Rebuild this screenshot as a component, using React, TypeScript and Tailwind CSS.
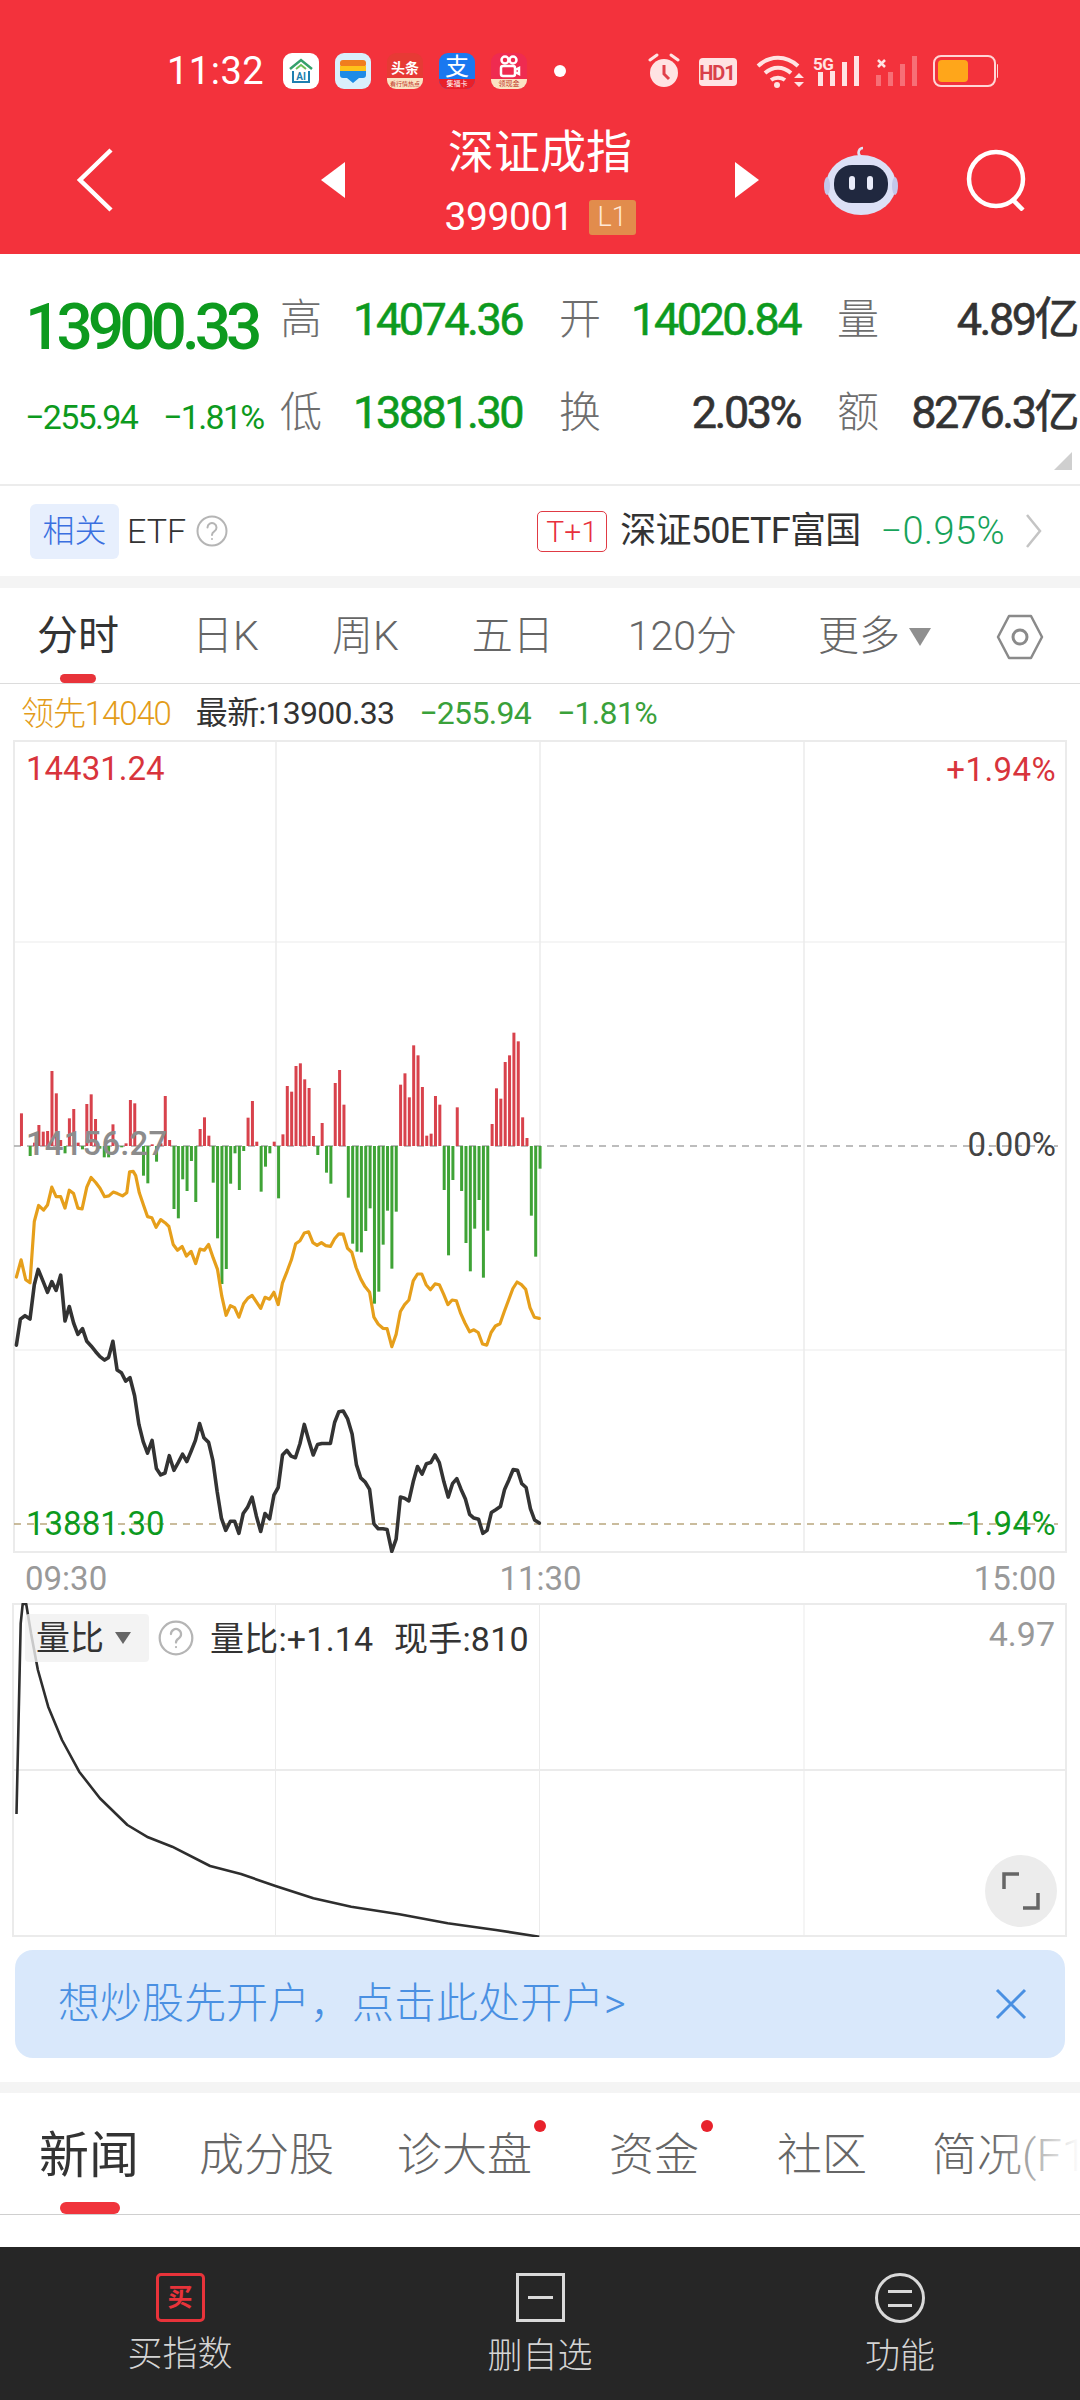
const BARS = [
  0, 98, 0, -30, 10, 63, 43, 45, 225, 158, 18, -22, 83, 111, 10, -10, 126, 155, 81, -8, -34, -34, 65, 0, -4, 8, 138, 128, 0, -89,
  -112, 5, -47, 8, 150, 18, -189, -217, -100, -135, -45, -168, 51, 86, 31, -110, -277, -414, -369, -113, -22, -132, -15, 85, 135, 13, -137, -62, -22, 13,
  -157, 35, 180, 163, 240, 248, 200, 174, 30, -27, 69, -80, -113, 189, 228, 124, -155, -293, -317, -319, -255, -187, -473, -437, -296, -194, -368, -197, 184, 218,
  146, 302, 272, 177, 31, 37, 150, 124, -132, -328, -102, 116, -135, -291, -376, -248, -162, -395, -254, 66, 173, 142, 252, 272, 340, 314, 86, 24, -209, -332,
  -68,
];

// traced from the reference, x/2.8 and y/2.613 + 990 give page pixels
const GOLD = [46,750,59,705,72,757,84,765,96,605,108,563,122,575,133,562,145,515,157,540,170,540,182,570,194,523,206,532,218,570,230,572,243,515,255,490,268,503,280,518,293,540,305,538,317,528,329,532,343,538,355,530,363,475,373,474,380,485,390,530,403,565,413,592,425,595,437,620,450,600,462,608,473,618,485,665,497,680,510,670,522,695,535,683,548,715,560,677,572,680,584,665,597,700,609,730,621,800,633,850,645,825,657,830,669,855,682,820,694,805,706,798,718,815,730,832,742,803,755,808,767,790,779,822,791,765,804,735,816,705,828,663,840,655,852,635,864,632,876,660,888,667,900,660,912,668,925,670,937,650,949,637,961,638,973,675,985,685,997,725,1010,755,1022,775,1035,790,1047,855,1059,873,1072,884,1084,885,1097,932,1109,900,1121,840,1133,822,1145,810,1157,760,1169,742,1181,742,1193,770,1205,783,1218,768,1230,770,1242,795,1254,822,1266,810,1278,812,1290,845,1302,870,1315,893,1327,888,1339,895,1351,925,1363,928,1375,895,1387,878,1400,872,1412,840,1424,810,1436,780,1448,763,1460,770,1472,782,1484,830,1496,855,1510,858];
const BLACK = [46,928,57,860,70,851,84,860,96,770,107,730,120,760,133,790,145,762,157,785,170,745,182,865,194,827,206,870,218,900,231,885,243,918,255,930,268,945,280,958,293,967,304,960,316,918,328,993,340,1000,352,1022,364,1013,377,1060,389,1135,401,1180,413,1210,426,1177,438,1250,450,1267,462,1262,474,1217,487,1255,499,1235,511,1213,523,1232,535,1205,547,1177,559,1133,571,1170,584,1182,596,1230,608,1310,620,1380,632,1412,645,1388,657,1388,669,1420,681,1368,693,1352,706,1325,718,1375,730,1415,742,1368,755,1382,767,1320,779,1300,791,1215,803,1203,815,1218,827,1222,840,1185,852,1135,864,1175,877,1215,889,1188,901,1185,925,1185,937,1130,949,1102,961,1100,973,1120,986,1160,998,1240,1010,1275,1022,1285,1035,1305,1047,1395,1059,1408,1072,1408,1084,1410,1097,1467,1109,1435,1121,1325,1133,1328,1145,1335,1157,1285,1169,1245,1182,1265,1194,1238,1206,1235,1218,1215,1230,1235,1243,1285,1255,1325,1267,1290,1279,1277,1291,1305,1303,1330,1315,1370,1327,1380,1340,1383,1352,1420,1364,1412,1376,1365,1388,1358,1401,1350,1413,1305,1425,1280,1437,1253,1449,1255,1461,1290,1473,1300,1485,1355,1497,1385,1510,1393];
// x/1.452 and y/3 + 1590
const RATIO = [24,672,30,100,33,42,38,42,45,130,55,240,70,350,90,450,115,545,145,625,185,705,215,742,250,770,305,828,350,852,400,888,455,925,510,950,580,973,650,1000,720,1020,783,1040];

const tracePoints = (d: number[], sx: number, sy: number, oy: number) => {
  const out: string[] = [];
  for (let i = 0; i < d.length; i += 2) {
    out.push(`${(d[i] / sx).toFixed(1)},${(d[i + 1] / sy + oy).toFixed(1)}`);
  }
  return out.join(" ");
};

function MainChart() {
  return (
    <svg viewBox="13 740 1054 813" className="absolute inset-0 h-full w-full">
      <g stroke="#ebebeb" fill="none">
        <rect x="14" y="741" width="1052" height="811" strokeWidth="2" />
        <path d="M276 741V1552M540 741V1552M804 741V1552" strokeWidth="1.5" />
        <path d="M14 942H1066M14 1350H1066" strokeWidth="1" />
      </g>
      <path d="M14 1146H1058" stroke="#a8a8a8" strokeWidth="1.5" strokeDasharray="7 6" />
      <path d="M14 1524H1058" stroke="#b9a67d" strokeWidth="1.5" strokeDasharray="7 6" />
      {BARS.map((v, i) =>
        v === 0 ? null : (
          <rect
            key={i}
            x={15.6 + 4.358 * i}
            y={v > 0 ? 1146 - v / 3 : 1146}
            width="3"
            height={Math.abs(v) / 3}
            fill={v > 0 ? "#d8424c" : "#3fa336"}
          />
        )
      )}
      <polyline points={tracePoints(GOLD, 2.8, 2.613, 990)} fill="none" stroke="#e69f1b" strokeWidth="3.200" strokeLinejoin="round" strokeLinecap="round" />
      <polyline points={tracePoints(BLACK, 2.8, 2.613, 990)} fill="none" stroke="#333333" strokeWidth="3.600" strokeLinejoin="round" strokeLinecap="round" />
    </svg>
  );
}

function RatioChart() {
  return (
    <svg viewBox="12 1603 1055 334" className="absolute inset-0 h-full w-full">
      <g stroke="#ebebeb" fill="none">
        <rect x="13" y="1604" width="1053" height="332" strokeWidth="2" />
        <path d="M275.500 1604V1936M539.500 1604V1936M804 1604V1936" strokeWidth="1" />
        <path d="M13 1770H1066" strokeWidth="2" />
      </g>
      <polyline points={tracePoints(RATIO, 1.452, 3, 1590)} fill="none" stroke="#2e2e2e" strokeWidth="2.600" strokeLinejoin="round" />
    </svg>
  );
}

function Quote({ label, value, dark }: { label: string; value: string; dark?: boolean }) {
  return (
    <div className="flex items-center justify-between">
      <span className="text-[42px] font-light leading-none text-[#6e6e6e]">{label}</span>
      <span className={`text-[45px] leading-none tracking-[-2.500px] [-webkit-text-stroke:0.6px_currentColor] ${dark ? "text-[#333333]" : "text-[#0d9a1e]"}`}>{value}</span>
    </div>
  );
}

function HelpDot({ size }: { size: number }) {
  return (
    <svg width={size} height={size} viewBox="0 0 32 32" fill="none" stroke="#b5b5b5">
      <circle cx="16" cy="16" r="14.500" strokeWidth="2" />
      <path d="M11.500 12.500a4.500 4.500 0 1 1 6.800 3.900c-1.500.9-2.300 1.600-2.300 3.600" strokeWidth="2" strokeLinecap="round" />
      <circle cx="16" cy="24" r="1" fill="#b5b5b5" stroke="none" />
    </svg>
  );
}

function AppIcon({ children, className }: { children: React.ReactNode; className: string }) {
  return <div className={`relative h-[36px] w-[36px] shrink-0 overflow-hidden rounded-[9px] ${className}`}>{children}</div>;
}

function StatusBar() {
  return (
    <div className="flex h-[54px] items-center pl-[167px] text-white">
      <span className="w-[116px] text-[38px] leading-none tracking-[0.5px]">11:32</span>
      <div className="flex items-center gap-[16px]">
        <AppIcon className="bg-white">
          <svg viewBox="0 0 36 36" className="h-full w-full" fill="none">
            <path d="M7 16 18 7l11 9" stroke="#35a06c" strokeWidth="2.500" />
            <path d="M10 18v11h16V18" stroke="#1e7fb0" strokeWidth="2" />
            <path d="M13 16l5-4 5 4" stroke="#6cc05a" strokeWidth="2" />
            <text x="18" y="27" textAnchor="middle" fontSize="10" fill="#1e7fb0" fontFamily="Roboto, sans-serif" fontWeight="700">AI</text>
          </svg>
        </AppIcon>
        <AppIcon className="bg-[#d9effc]">
          <svg viewBox="0 0 36 36" className="h-full w-full">
            <rect x="5" y="7" width="26" height="7" rx="3" fill="#f07e1e" />
            <rect x="5" y="13" width="26" height="6" fill="#ffc21a" />
            <path d="M5 18h26v4a3 3 0 0 1-3 3h-4l-6 5-6-5H8a3 3 0 0 1-3-3z" fill="#1d8be6" />
          </svg>
        </AppIcon>
        <AppIcon className="bg-[#e73a35]">
          <div className="flex h-[27px] items-center justify-center pt-[3px] text-[14px] font-bold leading-none text-white">头条</div>
          <div className="absolute inset-x-0 bottom-0 h-[11px] bg-[#fbe3c3] text-center text-[6px] leading-[11px] text-[#c0392b]">看行情热点</div>
        </AppIcon>
        <AppIcon className="bg-[#1a78f0]">
          <div className="flex h-[27px] items-center justify-center text-[24px] leading-none text-white">支</div>
          <div className="absolute inset-x-0 bottom-0 h-[10px] bg-[#e8202a] text-center text-[7px] leading-[10px] text-white">集福卡</div>
        </AppIcon>
        <AppIcon className="bg-[#ef2b50]">
          <svg viewBox="0 0 36 36" className="h-full w-full" fill="none" stroke="#fff" strokeWidth="2.500">
            <circle cx="14" cy="7" r="3.500" />
            <circle cx="22" cy="7" r="3.500" />
            <rect x="10" y="13" width="14" height="10" rx="2" />
            <path d="M24 17l4-2v6l-4-2" />
          </svg>
          <div className="absolute inset-x-0 bottom-0 h-[10px] bg-[#fbe3c3] text-center text-[7px] leading-[10px] text-[#c0392b]">领现金</div>
        </AppIcon>
      </div>
      <span className="ml-[27px] h-[12px] w-[12px] rounded-full bg-white" />
      <svg className="ml-[82px] shrink-0" width="350" height="36" viewBox="650 53 350 36" fill="none">
        <circle cx="666" cy="73" r="14" fill="#ffe3e3" />
        <path d="M652 60l7-5M680 60l-7-5" stroke="#ffe3e3" strokeWidth="3" strokeLinecap="round" />
        <path d="M666 65v9l5 5" stroke="#e0404a" strokeWidth="3" />
        <rect x="701" y="58" width="38" height="28" rx="4" fill="#ffe3e3" />
        <text x="719" y="80" textAnchor="middle" fontSize="20" fontWeight="700" fill="#d9404a" fontFamily="Roboto, sans-serif" letterSpacing="-1">HD1</text>
        <path d="M760 66c12-11 28-11 40 0" stroke="#ffe3e3" strokeWidth="4" />
        <path d="M767 73c8-7 18-7 26 0" stroke="#ffe3e3" strokeWidth="4" />
        <path d="M773 80c4-3 10-3 14 0" stroke="#ffe3e3" strokeWidth="4" />
        <circle cx="779" cy="85" r="3" fill="#ffe3e3" />
        <path d="M796 78l5-5 5 5zM796 82l5 5 5-5z" fill="#ffe3e3" />
        <text x="815" y="70" fontSize="17" fontWeight="700" fill="#ffe3e3" fontFamily="Roboto, sans-serif" letterSpacing="-0.500">5G</text>
        <path d="M820 72h5v14h-5zM832 71h5v15h-5zM844 62h5v24h-5zM856 56h5v30h-5z" fill="#ffe3e3" />
        <path d="M880 60l7 7m0-7l-7 7" stroke="#ffe3e3" strokeWidth="2.500" />
        <path d="M878 75h5v11h-5zM890 72h5v14h-5zM902 64h5v22h-5zM914 56h5v30h-5z" fill="#ffe3e3" opacity="0.350" />
        <rect x="936" y="56" width="61" height="30" rx="7" stroke="#ffd6d6" strokeWidth="2" />
        <rect x="940" y="60" width="30" height="22" rx="4" fill="#ffa61a" />
        <rect x="999" y="64" width="2.500" height="14" rx="1" fill="#ffd6d6" />
      </svg>
    </div>
  );
}

function NavBar() {
  return (
    <div className="mt-[24px] flex h-[115px] items-center text-white">
      <svg className="ml-[76px] shrink-0" width="38" height="66" viewBox="0 0 38 66" fill="none" stroke="#fff" strokeWidth="4.500">
        <path d="M35 3 4 33l31 30" />
      </svg>
      <svg className="ml-[207px] shrink-0" width="24" height="36" viewBox="0 0 24 36" fill="#fff">
        <path d="M24 0v36L0 18z" />
      </svg>
      <div className="flex w-[390px] flex-col items-center">
        <span className="text-[46px] leading-[58px]">深证成指</span>
        <div className="mt-[17px] flex items-center gap-[15px]">
          <span className="text-[39px] leading-none tracking-[-0.400px]">399001</span>
          <span className="flex h-[35px] w-[47px] items-center justify-center rounded-[3px] bg-[#e28c4c] text-[27px] font-light leading-none text-[#ffe9d8]">L1</span>
        </div>
      </div>
      <svg className="shrink-0" width="24" height="36" viewBox="0 0 24 36" fill="#fff">
        <path d="M0 0v36l24-18z" />
      </svg>
      <svg className="ml-[64px] shrink-0" width="76" height="72" viewBox="0 0 76 72">
        <path d="M37 12c-3-3-1-8 3-8" stroke="#dfe3f5" strokeWidth="2.500" fill="none" />
        <ellipse cx="38" cy="41" rx="35" ry="30" fill="#dce0f6" />
        <ellipse cx="4" cy="42" rx="3" ry="9" fill="#c3c7ea" />
        <ellipse cx="72" cy="42" rx="3" ry="9" fill="#c3c7ea" />
        <rect x="11" y="21" width="54" height="38" rx="18" fill="#20283f" />
        <rect x="26" y="32" width="6" height="14" rx="3" fill="#e9ecfa" />
        <rect x="44" y="32" width="6" height="14" rx="3" fill="#e9ecfa" />
      </svg>
      <svg className="ml-[67px] shrink-0" width="62" height="62" viewBox="0 0 62 62" fill="none" stroke="#fff" strokeWidth="4.500">
        <circle cx="30" cy="30" r="27" />
        <path d="M46 50l11 11" />
      </svg>
    </div>
  );
}

export default function App() {
  return (
    <div className="relative h-[2400px] w-[1080px] overflow-hidden bg-white font-[family-name:Roboto,'Noto_Sans_CJK_SC',sans-serif]">
      <header className="h-[254px] bg-[#f3323c] pt-[44px]">
        <StatusBar />
        <NavBar />
      </header>

      <section className="relative flex h-[232px] border-b-2 border-[#ececec] pl-[25px] pt-[19px]">
        <div className="w-[255px] shrink-0">
          <div className="mt-[12px] flex h-[85px] items-center text-[64px] font-medium leading-none tracking-[-5.000px] text-[#0d9a1e]">13900.33</div>
          <div className="mt-[30px] flex h-[34px] items-center gap-[26px] whitespace-nowrap text-[34px] leading-none tracking-[-1.700px] text-[#0d9a1e]">
            <span>−255.94</span>
            <span>−1.81%</span>
          </div>
        </div>
        <div className="grid h-[186px] grid-cols-[242px_241px_240px] grid-rows-2 gap-x-[37px]">
          <Quote label="高" value="14074.36" />
          <Quote label="开" value="14020.84" />
          <Quote label="量" value="4.89亿" dark />
          <Quote label="低" value="13881.30" />
          <Quote label="换" value="2.03%" dark />
          <Quote label="额" value="8276.3亿" dark />
        </div>
        <svg className="absolute bottom-[14px] right-[8px]" width="18" height="18" viewBox="0 0 18 18" fill="#cfcfcf">
          <path d="M18 0v18H0z" />
        </svg>
      </section>

      <section className="flex h-[90px] items-center pl-[30px] pr-[38px]">
        <span className="flex h-[55px] w-[89px] items-center justify-center rounded-[6px] bg-[#e7effd] text-[32px] font-light text-[#3a6fe0]">相关</span>
        <span className="ml-[8px] text-[34px] font-light text-[#333333]">ETF</span>
        <span className="ml-[10px] flex"><HelpDot size={32} /></span>
        <span className="ml-auto flex h-[41px] w-[70px] items-center justify-center rounded-[5px] border border-[#e03a44] text-[30px] font-light text-[#e8303c]">T+1</span>
        <span className="ml-[13px] text-[36px] tracking-[-0.700px] text-[#333333]">深证50ETF富国</span>
        <span className="ml-[20px] text-[38px] font-light tracking-[0.400px] text-[#17a35a]">−0.95%</span>
        <svg className="ml-[20px]" width="17" height="36" viewBox="0 0 17 36" fill="none" stroke="#c4c4c4" strokeWidth="2.500">
          <path d="M2 2l13 16L2 34" />
        </svg>
      </section>

      <div className="h-[12px] bg-[#f4f4f4]" />

      <nav className="relative flex h-[96px] items-center border-b border-[#dcdcdc] pt-[2px] text-[41px] font-light leading-none text-[#666666]">
        <span className="ml-[37px] font-normal text-[#333333]">分时</span>
        <span className="ml-[73px]">日K</span>
        <span className="ml-[73px]">周K</span>
        <span className="ml-[73px]">五日</span>
        <span className="ml-[74px]">120分</span>
        <span className="ml-[81px]">更多</span>
        <svg className="ml-[9px]" width="22" height="18" viewBox="0 0 22 18" fill="#8f8f8f">
          <path d="M0 0h22L11 18z" />
        </svg>
        <svg className="ml-[65px]" width="48" height="46" viewBox="0 0 48 46" fill="none" stroke="#8a8a8a" strokeWidth="2.500">
          <path d="M13 2h22l11 21-11 21H13L2 23z" strokeLinejoin="round" />
          <circle cx="24" cy="23" r="7" strokeWidth="3" />
        </svg>
        <span className="absolute bottom-0 left-[60px] h-[9px] w-[36px] rounded-full bg-[#e8333a]" />
      </nav>

      <div className="flex h-[56px] items-center pl-[21px] pt-[2px] text-[32px] leading-none">
        <span className="text-[33px] font-light tracking-[-1.100px] text-[#e39c1a]">领先14040</span>
        <span className="ml-[25px] tracking-[-0.700px] text-[#333333]">最新:13900.33</span>
        <span className="ml-[25px] tracking-[-0.700px] text-[#3aa13a]">−255.94</span>
        <span className="ml-[26px] tracking-[-0.700px] text-[#3aa13a]">−1.81%</span>
      </div>

      <div className="relative ml-[13px] h-[813px] w-[1054px] text-[33px] leading-none">
        <MainChart />
        <span className="absolute left-[13px] top-[12px] text-[#d8343c]">14431.24</span>
        <span className="absolute right-[11px] top-[13px] tracking-[0.400px] text-[#d8343c]">+1.94%</span>
        <span className="absolute left-[13px] top-[387px] font-medium tracking-[0.100px] text-[#8c8c8c]">14156.27</span>
        <span className="absolute right-[11px] top-[388px] text-[#444444]">0.00%</span>
        <span className="absolute left-[13px] top-[767px] text-[#0d9a1e]">13881.30</span>
        <span className="absolute right-[11px] top-[767px] tracking-[0.400px] text-[#0d9a1e]">−1.94%</span>
      </div>

      <div className="flex h-[50px] items-center justify-between pl-[25px] pr-[24px] text-[33px] leading-none text-[#999999]">
        <span>09:30</span>
        <span>11:30</span>
        <span>15:00</span>
      </div>

      <div className="relative ml-[12px] h-[334px] w-[1055px] text-[34px] leading-none">
        <RatioChart />
        <div className="absolute left-[13px] top-[11px] flex h-[48px] w-[124px] items-center rounded-[4px] bg-[#f0f0f0]/80 pl-[11px] text-[#333333]">
          <span>量比</span>
          <svg className="ml-[11px]" width="16" height="12" viewBox="0 0 16 12" fill="#666666">
            <path d="M0 0h16L8 12z" />
          </svg>
        </div>
        <span className="absolute left-[146px] top-[17px] flex"><HelpDot size={36} /></span>
        <span className="absolute left-[198px] top-[19px] tracking-[0.200px] text-[#333333]">量比:+1.14</span>
        <span className="absolute left-[382px] top-[19px] tracking-[0.200px] text-[#333333]">现手:810</span>
        <span className="absolute right-[12px] top-[14px] text-[#999999]">4.97</span>
        <div className="absolute left-[973px] top-[252px] flex h-[72px] w-[72px] items-center justify-center rounded-full bg-[#ececec]">
          <svg width="38" height="38" viewBox="0 0 38 38" fill="none" stroke="#666666" strokeWidth="3.500">
            <path d="M2 17V2h15M36 21v15H21" />
          </svg>
        </div>
      </div>

      <div className="mx-[15px] mt-[13px] flex h-[108px] items-center justify-between rounded-[18px] bg-[#d9e8fb] pl-[43px] pr-[38px]">
        <span className="text-[42px] font-light leading-none text-[#4a90e2]">想炒股先开户，点击此处开户&gt;</span>
        <svg width="32" height="32" viewBox="0 0 32 32" fill="none" stroke="#4a90e2" strokeWidth="3">
          <path d="M2 2l28 28M30 2L2 30" />
        </svg>
      </div>

      <div className="mt-[24px] h-[11px] bg-[#f4f4f4]" />

      <nav className="relative flex h-[122px] items-center overflow-hidden whitespace-nowrap border-b border-[#cfcfcf] pt-[4px] text-[45px] font-light leading-none text-[#666666]">
        <span className="ml-[39px] shrink-0 text-[50px] font-normal text-[#333333]">新闻</span>
        <span className="ml-[60px] shrink-0">成分股</span>
        <span className="relative ml-[63px] shrink-0">诊大盘<i className="absolute -right-[14px] -top-[13px] h-[12px] w-[12px] rounded-full bg-[#e8222c]" /></span>
        <span className="relative ml-[77px] shrink-0">资金<i className="absolute -right-[14px] -top-[13px] h-[12px] w-[12px] rounded-full bg-[#e8222c]" /></span>
        <span className="ml-[78px] shrink-0">社区</span>
        <span className="ml-[65px] shrink-0">简况(F10)</span>
        <span className="absolute inset-y-0 right-0 w-[90px] bg-gradient-to-r from-transparent to-white" />
        <span className="absolute bottom-0 left-[60px] h-[12px] w-[60px] rounded-full bg-[#f0343c]" />
      </nav>

      <div className="h-[32px]" />

      <footer className="grid h-[153px] grid-cols-3 bg-[#262626] pt-[26px] text-[35px] font-light leading-none text-[#d4d4d4]">
        <div className="flex flex-col items-center">
          <div className="flex h-[49px] w-[49px] items-center justify-center rounded-[5px] border-[3px] border-[#e8333a] text-[25px] font-bold leading-none text-[#e8333a]">买</div>
          <span className="mt-[15px]">买指数</span>
        </div>
        <div className="flex flex-col items-center">
          <div className="flex h-[49px] w-[49px] items-center justify-center border-[3px] border-[#d9d9d9]">
            <span className="h-[3px] w-[25px] bg-[#d9d9d9]" />
          </div>
          <span className="mt-[17px]">删自选</span>
        </div>
        <div className="flex flex-col items-center">
          <div className="flex h-[50px] w-[50px] flex-col items-center justify-center gap-[11px] rounded-full border-[3px] border-[#d9d9d9]">
            <span className="h-[3px] w-[24px] bg-[#d9d9d9]" />
            <span className="h-[3px] w-[24px] bg-[#d9d9d9]" />
          </div>
          <span className="mt-[16px]">功能</span>
        </div>
      </footer>
    </div>
  );
}
